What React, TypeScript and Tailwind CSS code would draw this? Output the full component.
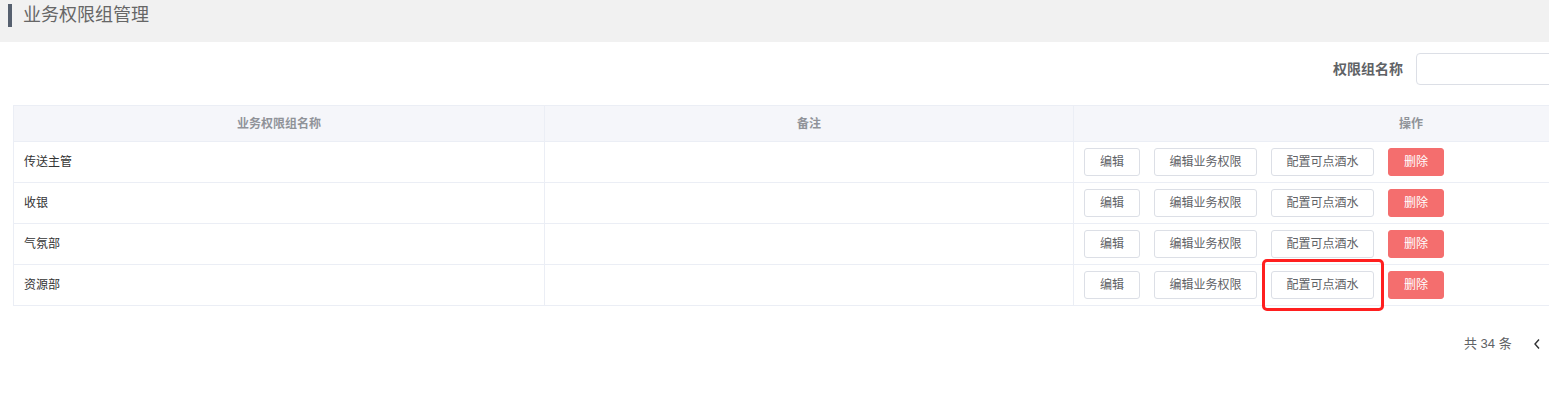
import React from 'react';

const rows = ['传送主管', '收银', '气氛部', '资源部'];

const font = { fontFamily: '"Liberation Sans", "Noto Sans CJK SC", sans-serif' };

function Btn({ children, danger, wide }: { children: React.ReactNode; danger?: boolean; wide?: boolean }) {
  const w = wide ? 'w-[103px]' : 'w-[56px]';
  return (
    <button
      className={
        danger
          ? `${w} h-[28px] rounded-[3px] border border-[#f46e6e] bg-[#f46e6e] text-white text-[12px] leading-none`
          : `${w} h-[28px] rounded-[3px] border border-[#dcdfe6] bg-white text-[#606266] text-[12px] leading-none`
      }
    >
      {children}
    </button>
  );
}

export default function App() {
  return (
    <div className="relative w-full h-[411px] overflow-hidden bg-white" style={font}>
      <div className="w-[1762px]">
        {/* 标题 */}
        <div className="h-[42px] bg-[#f1f1f1] pt-[4px] pl-[8px] flex items-start">
          <div className="flex items-center gap-[11px]">
            <span className="w-[4px] h-[23px] bg-[#56606f]" />
            <span className="text-[18px] leading-[23px] text-[#666]">业务权限组管理</span>
          </div>
        </div>

        {/* 搜索 */}
        <div className="flex justify-end pr-[13px] pt-[11px] h-[63px] items-start">
          <div className="flex items-center gap-[13px]">
            <span className="text-[14px] font-bold text-[#606266]">权限组名称</span>
            <input className="w-[333px] h-[32px] rounded-[4px] border border-[#dcdfe6] outline-none" />
          </div>
        </div>

        {/* 表格 */}
        <div className="mx-[13px] border-l border-t border-[#ebeef5]">
          <div className="flex h-[36px] bg-[#f5f6fa] text-[12px] font-bold text-[#909399] border-b border-[#ebeef5]">
            <div className="w-[531px] flex items-center justify-center border-r border-[#ebeef5]">业务权限组名称</div>
            <div className="w-[529px] flex items-center justify-center border-r border-[#ebeef5]">备注</div>
            <div className="flex-1 flex items-center justify-center border-r border-[#ebeef5]">操作</div>
          </div>
          {rows.map((name) => (
            <div key={name} className="flex h-[41px] text-[12px] text-[#333] border-b border-[#ebeef5]">
              <div className="w-[531px] flex items-center pl-[10px] border-r border-[#ebeef5]">{name}</div>
              <div className="w-[529px] border-r border-[#ebeef5]" />
              <div className="flex-1 flex items-center gap-[14px] pl-[10px] border-r border-[#ebeef5]">
                <Btn>编辑</Btn>
                <Btn wide>编辑业务权限</Btn>
                <Btn wide>配置可点酒水</Btn>
                <Btn danger>删除</Btn>
              </div>
            </div>
          ))}
        </div>

        {/* 分页 */}
        <div className="flex items-center pt-[28px] pl-[1464px] text-[13px] text-[#606266]">
          <span>共 34 条</span>
          <svg className="ml-[21px]" width="8" height="12" viewBox="0 0 8 12" fill="none">
            <path d="M6 1.5 L2 6 L6 10.5" stroke="#303133" strokeWidth="1.4" />
          </svg>
        </div>
      </div>

      <div className="absolute left-[1262px] top-[259px] w-[122px] h-[52px] border-[3px] border-[#ff1f1f] rounded-[5px]" />
    </div>
  );
}
